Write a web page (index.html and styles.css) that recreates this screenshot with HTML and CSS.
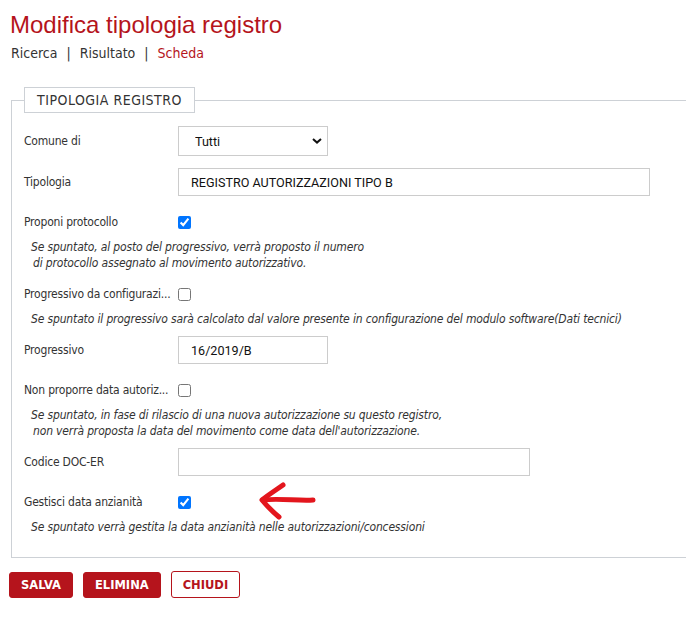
FILE: index.html
```html
<!DOCTYPE html>
<html lang="it">
<head>
<meta charset="utf-8">
<title>Modifica tipologia registro</title>
<link rel="stylesheet" href="styles.css">
</head>
<body>
<h1 class="title">Modifica tipologia registro</h1>
<nav class="crumbs">
  <a class="crumb">Ricerca</a><span class="sep">|</span><a class="crumb">Risultato</a><span class="sep">|</span><a class="crumb current">Scheda</a>
</nav>
<form class="form">
  <fieldset class="panel">
    <legend class="legend">TIPOLOGIA REGISTRO</legend>

    <div class="row row-first">
      <label class="lbl">Comune di</label>
      <div class="select-wrap">
        <select class="select"><option>Tutti</option></select>
        <svg class="chev" width="10" height="6" viewBox="0 0 10 6"><path d="M1 1 L5 4.6 L9 1" fill="none" stroke="#111" stroke-width="2"/></svg>
      </div>
    </div>

    <div class="row">
      <label class="lbl">Tipologia</label>
      <input class="input w-long" type="text" value="REGISTRO AUTORIZZAZIONI TIPO B">
    </div>

    <div class="row">
      <label class="lbl">Proponi protocollo</label>
      <input class="check" type="checkbox" checked>
    </div>
    <p class="help">Se spuntato, al posto del progressivo, verrà proposto il numero<br><span class="indent">di protocollo assegnato al movimento autorizzativo.</span></p>

    <div class="row">
      <label class="lbl" title="Progressivo da configurazione">Progressivo da configurazi...</label>
      <input class="check" type="checkbox">
    </div>
    <p class="help">Se spuntato il progressivo sarà calcolato dal valore presente in configurazione del modulo software(Dati tecnici)</p>

    <div class="row">
      <label class="lbl">Progressivo</label>
      <input class="input w-short" type="text" value="16/2019/B">
    </div>

    <div class="row">
      <label class="lbl" title="Non proporre data autorizzazione">Non proporre data autoriz...</label>
      <input class="check" type="checkbox">
    </div>
    <p class="help">Se spuntato, in fase di rilascio di una nuova autorizzazione su questo registro,<br><span class="indent">non verrà proposta la data del movimento come data dell'autorizzazione.</span></p>

    <div class="row">
      <label class="lbl">Codice DOC-ER</label>
      <input class="input w-mid" type="text" value="">
    </div>

    <div class="row row-mark">
      <label class="lbl">Gestisci data anzianità</label>
      <input class="check" type="checkbox" checked>
      <svg class="arrow" width="60" height="40" viewBox="0 0 60 40">
        <path d="M25 3 C18 8 10 13 4 18 C9 24 15 30 21 35" fill="none" stroke="#e3161d" stroke-width="5" stroke-linecap="round" stroke-linejoin="round"/>
        <path d="M5 18 C20 16 40 19 55 18" fill="none" stroke="#e3161d" stroke-width="5" stroke-linecap="round"/>
      </svg>
    </div>
    <p class="help">Se spuntato verrà gestita la data anzianità nelle autorizzazioni/concessioni</p>
  </fieldset>

  <div class="actions">
    <button type="button" class="btn btn-fill">SALVA</button>
    <button type="button" class="btn btn-fill">ELIMINA</button>
    <button type="button" class="btn btn-line">CHIUDI</button>
  </div>
</form>
</body>
</html>
```
FILE: styles.css
```css
html, body {
  margin: 0;
  padding: 0;
  background: #ffffff;
  overflow: hidden;
}
body {
  font-family: "DejaVu Sans", Tahoma, sans-serif;
  font-stretch: condensed;
  color: #333333;
}
.title {
  margin: 11px 0 0 10px;
  font-family: "Liberation Sans", Arial, sans-serif;
  font-stretch: normal;
  font-weight: normal;
  font-size: 24px;
  line-height: 28px;
  color: #b5141c;
}
.crumbs {
  margin: 5px 0 0 11px;
  font-size: 14px;
  line-height: 18px;
}
.crumb { color: #333333; }
.crumb.current { color: #b5141c; }
.sep { margin: 0 9px; color: #333333; }

.form { margin: 0; }
.panel {
  margin: 25px 0 0 11px;
  padding: 13px 0 22px 12px;
  border: 1px solid #cdd1d6;
  border-right: none;
  min-width: 0;
}
.legend {
  padding: 0 12px;
  margin: 0;
  border: 1px solid #cdd1d6;
  font-size: 14px;
  line-height: 24px;
  letter-spacing: 0.5px;
  color: #333333;
}
.row {
  position: relative;
  display: flex;
  align-items: center;
  height: 28px;
  margin-top: 12px;
}
.row-first { margin-top: 0; height: 30px; }
.help + .row { margin-top: 9px; }
.lbl {
  width: 150px;
  margin-right: 4px;
  font-size: 12px;
  line-height: 16px;
  letter-spacing: -0.2px;
  white-space: nowrap;
  flex: none;
}
.select-wrap {
  position: relative;
  width: 150px;
  height: 30px;
}
.select {
  appearance: none;
  -webkit-appearance: none;
  box-sizing: border-box;
  width: 150px;
  height: 30px;
  margin: 0;
  padding: 0 0 0 16px;
  border: 1px solid #cccccc;
  border-radius: 0;
  background: #ffffff;
  font-family: Roboto, "Liberation Sans", sans-serif;
  font-size: 12.6px;
  color: #111111;
}
.chev {
  position: absolute;
  right: 6px;
  top: 12px;
  pointer-events: none;
}
.input {
  box-sizing: border-box;
  height: 28px;
  margin: 0;
  padding: 0 0 0 12px;
  border: 1px solid #cccccc;
  border-radius: 0;
  background: #ffffff;
  font-family: Roboto, "Liberation Sans", sans-serif;
  font-stretch: normal;
  font-size: 12.6px;
  color: #111111;
}
.w-long { width: 472px; }
.w-short { width: 150px; }
.w-mid { width: 352px; }
.check {
  width: 13px;
  height: 13px;
  margin: 0;
}
.help {
  margin: 3px 0 0 7px;
  font-size: 12px;
  line-height: 16px;
  letter-spacing: -0.15px;
  font-style: italic;
  color: #333333;
}
.indent { padding-left: 2px; }
.arrow {
  position: absolute;
  left: 234px;
  top: -6px;
}
.actions {
  display: flex;
  gap: 10px;
  margin: 14px 0 0 9px;
}
.btn {
  box-sizing: border-box;
  height: 26px;
  padding: 0 11px;
  border-radius: 3px;
  font-family: "DejaVu Sans", Verdana, sans-serif;
  font-stretch: normal;
  font-weight: bold;
  font-size: 11.5px;
  line-height: 24px;
  cursor: pointer;
}
.btn-fill {
  background: #b5141c;
  border: 1px solid #b5141c;
  color: #ffffff;
}
.btn-line {
  background: #ffffff;
  border: 1px solid #b5141c;
  color: #b5141c;
  height: 27px;
  margin-top: -1px;
}
```
